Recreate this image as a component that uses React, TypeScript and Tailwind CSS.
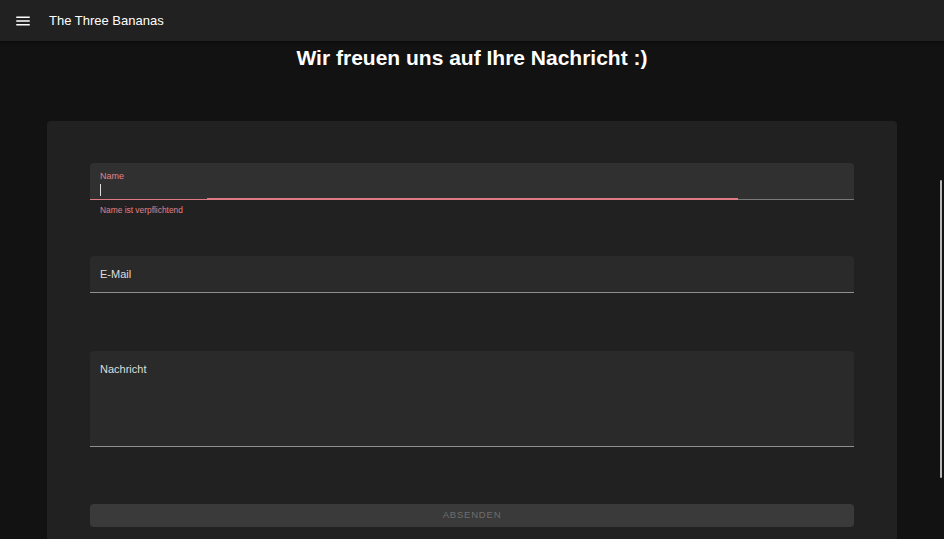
export default function App() {
  return (
    <div className="relative min-h-[539px] h-[539px] overflow-hidden bg-[#121212] font-['Liberation_Sans',Arial,sans-serif] text-white">
      {/* toolbar */}
      <header className="flex h-[41px] items-center bg-[#212121] shadow-[0_1px_3px_rgba(0,0,0,0.5)]">
        <button className="ml-[14px] flex h-[18px] w-[18px] items-center justify-center">
          <svg viewBox="0 0 24 24" width="18" height="18" fill="#ffffff">
            <path d="M3 18h18v-2H3v2zm0-5h18v-2H3v2zm0-7v2h18V6H3z" />
          </svg>
        </button>
        <span className="ml-[17px] text-[13px] leading-none">The Three Bananas</span>
      </header>

      <h1 className="mt-[5px] text-center text-[21px] font-bold leading-[24px]">
        Wir freuen uns auf Ihre Nachricht :)
      </h1>

      {/* card */}
      <div className="mx-[47px] mt-[51px] rounded-t-[4px] bg-[#212121] px-[43px] pt-[42px] pb-[40px]">
        {/* Name (focused, invalid) */}
        <div className="relative h-[37px] rounded-t-[4px] border-b border-[#7a7a7a] bg-[#303030] px-[10px] pt-[8px]">
          <div className="text-[9px] leading-[10px] text-[#e0828c]">Name</div>
          <div className="mt-[3px] h-[12px] w-px bg-[#dddddd]" />
          <div className="absolute bottom-[-1px] left-0 h-px w-[648px] bg-[#e07a85]" />
          <div className="absolute bottom-[-1px] left-[117px] h-[2px] w-[531px] bg-[#e07a85]" />
        </div>
        <div className="px-[10px] pt-[5px] text-[8.4px] leading-[10px] text-[#e0828c]">Name ist verpflichtend</div>

        {/* E-Mail */}
        <div className="mt-[41px] flex h-[37px] items-center rounded-t-[4px] border-b border-[#8f8f8f] bg-[#2a2a2a] px-[10px]">
          <span className="text-[11px] text-[#dedede]">E-Mail</span>
        </div>

        {/* Nachricht */}
        <div className="mt-[58px] h-[96px] rounded-t-[4px] border-b border-[#8f8f8f] bg-[#2a2a2a] px-[10px] pt-[12px]">
          <div className="text-[11px] leading-[12px] text-[#dedede]">Nachricht</div>
        </div>

        <button
          disabled
          className="mt-[57px] flex h-[23px] w-full items-center justify-center rounded-[4px] bg-[#3a3a3a] text-[9.5px] tracking-[0.8px] text-[#6e6e6e]"
        >
          ABSENDEN
        </button>
      </div>

      {/* scroll indicator */}
      <div className="absolute right-[2px] top-[180px] h-[298px] w-[2px] rounded-full bg-[#b8b8b8]" />
    </div>
  );
}
